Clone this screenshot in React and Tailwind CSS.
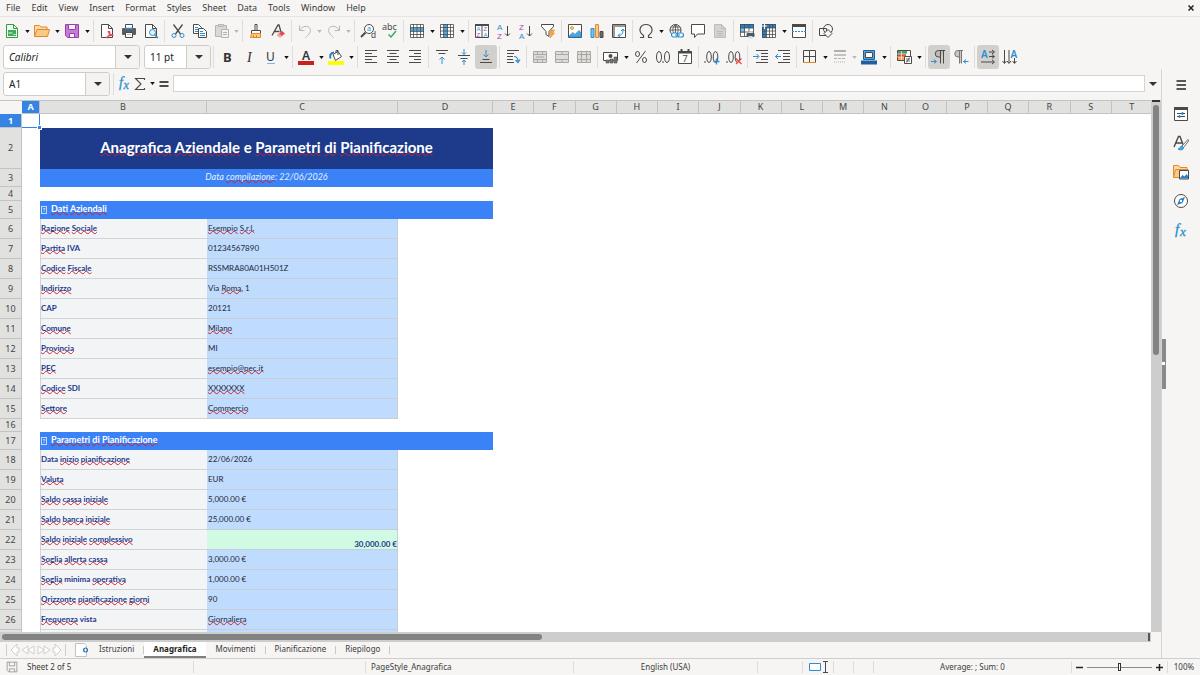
import React, { useState } from 'react';

const INK = '#4a4a48';
const BLUE = '#2a8fd0';
const LIGHT = '#b9b8b5';

// Small line glyphs, all drawn on a 16 x 16 grid
const glyphs = {
    newSheet: (
        <g>
            <path d="M2.5 1.5h7l4 4v9h-11z" fill="#f4fbf5" stroke="#2f9e44" />
            <path d="M9.5 1.5v4h4" fill="none" stroke="#2f9e44" />
            <rect x="4" y="7" width="8" height="6" fill="#43a858" />
            <path d="M4.5 10h4M9.5 11.500h2" stroke="#e6f7e9" />
        </g>
    ),
    open: (
        <g>
            <path d="M.5 13.500v-11h5l1.500 1.500h6v3" fill="#fbd9ab" stroke="#e08a2c" />
            <path d="M3 6.500h12.500l-2 7h-13z" fill="#fbc983" stroke="#e08a2c" />
        </g>
    ),
    save: (
        <g stroke="#9a3fae">
            <path d="M1.500 1.500h13v13h-11l-2-2z" fill="#c77bd6" />
            <path d="M4.500 1.500h7v5h-7z" fill="#fdf6ff" />
            <path d="M5.500 10.500h5v4h-5z" fill="#fdf6ff" />
        </g>
    ),
    pdf: (
        <g fill="none">
            <path d="M2.500 1.500h7l4 4v9h-11z" fill="#fff" stroke={INK} />
            <path d="M9.500 1.500v4h4" stroke={INK} />
            <path d="M8 15c2-2 3-5 2.500-7M9 8c1 3 3 4 5.500 4.500M7.500 15c1-2 4-3 7-2.500" stroke="#e5484d" strokeWidth="1.200" />
        </g>
    ),
    print: (
        <g>
            <path d="M4.500 5V1.500h7V5" fill="#fff" stroke={INK} />
            <rect x="1" y="5" width="14" height="7" rx="1" fill="#5b5c5e" />
            <path d="M4 5.500h8" stroke={BLUE} strokeWidth="1.500" />
            <path d="M4.500 9.500h7v5h-7z" fill="#fff" stroke={INK} />
            <path d="M6 11.500h4" stroke={LIGHT} />
        </g>
    ),
    preview: (
        <g fill="none">
            <path d="M2.500 1.500h7l4 4v9h-11z" fill="#fff" stroke={INK} />
            <path d="M9.500 1.500v4h4" stroke={INK} />
            <circle cx="9.500" cy="9.500" r="3" fill="#e4f3fc" stroke={BLUE} />
            <path d="M11.500 11.500l3.500 3.500" stroke={BLUE} strokeWidth="1.500" />
        </g>
    ),
    cut: (
        <g fill="none">
            <path d="M3.500 1.500l7 9.500M12.500 1.500l-7 9.500" stroke={INK} strokeWidth="1.300" />
            <circle cx="4" cy="12.500" r="2" stroke={BLUE} />
            <circle cx="12" cy="12.500" r="2" stroke={BLUE} />
        </g>
    ),
    copy: (
        <g fill="#fff" stroke={INK}>
            <path d="M1.500 1.500h5l3 3v6h-8z" />
            <path d="M3 4.500h3M3 6.500h4M3 8.500h4" stroke={BLUE} />
            <path d="M6.500 5.500h5l3 3v6h-8z" />
            <path d="M8 8.500h3M8 10.500h5M8 12.500h5" stroke={BLUE} />
        </g>
    ),
    paste: (
        <g stroke="#b5b4b1" fill="#d9d8d5">
            <path d="M1.500 2.500h11v11h-11z" />
            <path d="M4.500 1.500h5v2h-5z" />
            <path d="M7.500 6.500h7v8h-7z" fill="#f2f1ef" />
            <path d="M9 9.500h4M9 11.500h4" />
        </g>
    ),
    brush: (
        <g>
            <path d="M7 1.500h2v6H7z" fill="#fff" stroke={INK} />
            <path d="M3.500 7.500h9v3h-9z" fill="#fff" stroke={INK} />
            <path d="M3.500 10.500h9v4h-10z" fill="#fbc983" stroke="#e08a2c" />
            <path d="M5.500 12v2M8.500 12v2" stroke="#e08a2c" />
        </g>
    ),
    clear: (
        <g>
            <path d="M2 12.500L8 2h1l2 7M4.500 8.500h5" fill="none" stroke={INK} strokeWidth="1.300" />
            <path d="M7 12l5-4 3 2.500-5 4z" fill="#e5484d" />
            <path d="M7 12l2-1.500 3 2.500-2 1.500z" fill="#f6a5a7" />
        </g>
    ),
    undo: <path d="M2.500 2.500v5h5M3 7c2-4 8-5 10-1.500 1.500 3-1 6-4.500 9" fill="none" stroke={LIGHT} />,
    redo: <path d="M13.500 2.500v5h-5M13 7c-2-4-8-5-10-1.500-1.500 3 1 6 4.500 9" fill="none" stroke={LIGHT} />,
    find: (
        <g fill="none" fontFamily="Liberation Sans, sans-serif">
            <circle cx="9" cy="6" r="4.500" fill="#fff" stroke={INK} />
            <path d="M5.500 9.500l-4.500 4.500" stroke={INK} strokeWidth="2" />
            <text x="7" y="8" fontSize="7" fill={BLUE}>a</text>
            <text x="11" y="15" fontSize="9" fill={INK}>d</text>
        </g>
    ),
    spell: (
        <g>
            <text x="0" y="7" fontSize="9" fill={INK}>abc</text>
            <path d="M6.500 11.500l2.500 2.500 5-6" fill="none" stroke="#2fae6a" strokeWidth="1.500" />
        </g>
    ),
    row: (
        <g fill="none">
            <path d="M1.500 1.500h13v13h-13z" fill="#fff" />
            <path d="M1 5h14v3H1z" fill="#4ea6e0" />
            <path d="M1.500 1.500h13v13h-13zM1 4.500h14M1 8.500h14M1 11.500h14M4.500 1v14M8 1v14M11.500 1v14" stroke={INK} strokeWidth=".8" />
        </g>
    ),
    column: (
        <g fill="none">
            <path d="M1.500 1.500h13v13h-13z" fill="#fff" />
            <path d="M5 1h3.500v14H5z" fill="#4ea6e0" />
            <path d="M1.500 1.500h13v13h-13zM1 4.500h14M1 8h14M1 11.500h14M4.500 1v14M8.500 1v14M11.500 1v14" stroke={INK} strokeWidth=".8" />
        </g>
    ),
    sort: (
        <g fontFamily="Liberation Sans, sans-serif" fontSize="6">
            <path d="M1.500 1.500h13v13h-13zM8 2v12.500" fill="#fff" stroke={INK} />
            <path d="M1 2h14" stroke={INK} strokeWidth="2" />
            <text x="2.500" y="7.500" fill={BLUE}>A</text>
            <text x="2.500" y="14" fill="#a846c0">Z</text>
            <text x="9.500" y="7.500" fill="#a846c0">Z</text>
            <text x="9.500" y="14" fill={BLUE}>A</text>
        </g>
    ),
    sortAsc: (
        <g fill="none" fontFamily="Liberation Sans, sans-serif" fontSize="8">
            <text x="1" y="6.500" fill={BLUE}>A</text>
            <text x="1" y="15.500" fill="#a846c0">Z</text>
            <path d="M11.500 3v10M9 10.500l2.500 2.500 2.500-2.500" stroke={INK} />
        </g>
    ),
    sortDesc: (
        <g fill="none" fontFamily="Liberation Sans, sans-serif" fontSize="8">
            <text x="1" y="6.500" fill="#a846c0">Z</text>
            <text x="1" y="15.500" fill={BLUE}>A</text>
            <path d="M11.500 3v10M9 10.500l2.500 2.500 2.500-2.500" stroke={INK} />
        </g>
    ),
    filter: (
        <g>
            <path d="M1.500 1.500h12v2l-4.500 5v5l-3-2v-3l-4.500-5z" fill="#fff" stroke={INK} />
            <path d="M11 7h3.500l-2 3h2L10 15l1-4H9z" fill="#f5a742" stroke="#e08a2c" strokeWidth=".6" />
        </g>
    ),
    image: (
        <g>
            <path d="M1.500 1.500h13v13h-13z" fill="#fff" stroke={INK} />
            <path d="M2 13l4-3.500 2 2 4-4 2 2.500v4H2z" fill="#4ea6e0" stroke={BLUE} strokeWidth=".8" />
            <circle cx="5" cy="5" r="1.500" fill="#fbc983" stroke="#e08a2c" strokeWidth=".8" />
        </g>
    ),
    chart: (
        <g>
            <path d="M2 5.500h3v9H2z" fill="#7cc0ec" stroke={BLUE} />
            <path d="M6.500 1.500h3v13h-3z" fill="#fbc983" stroke="#e08a2c" />
            <path d="M11 8.500h3v6h-3z" fill="#6b6b69" stroke={INK} />
        </g>
    ),
    pivot: (
        <g fill="none">
            <path d="M1.500 1.500h13v13h-13z" fill="#fff" stroke={INK} />
            <path d="M2 3h12M3 2v12" stroke="#9a9a98" strokeWidth="2" />
            <path d="M7 12.500c4 0 5-2 5-6M7 12.500l2-2M7 12.500l2 1.500M12 6l-2 2M12 6l1.500 2" stroke={BLUE} />
        </g>
    ),
    omega: <path d="M2 14.500h3.500v-2C-1 8 2.500 1.500 8 1.500s9 6.500 2.500 11v2H14" fill="none" stroke={INK} strokeWidth="1.200" />,
    link: (
        <g fill="none">
            <circle cx="7.500" cy="7" r="5.500" stroke={INK} />
            <path d="M2 7h11M3 4h9M7.500 1.500v11M7.500 1.500c-4 4-3 8 0 11M7.500 1.500c4 4 3 8 0 11" stroke={INK} strokeWidth=".8" />
            <rect x="3.500" y="10" width="6" height="4" rx="2" fill="#fff" stroke={BLUE} strokeWidth="1.200" />
            <rect x="9.500" y="10" width="6" height="4" rx="2" fill="#fff" stroke={BLUE} strokeWidth="1.200" />
            <path d="M7 12h5" stroke={BLUE} />
        </g>
    ),
    comment: <path d="M1.500 1.500h13v9.500H7.500L4.500 14.500V11h-3z" fill="#fff" stroke={INK} />,
    header: (
        <g stroke="#bdbcb9">
            <path d="M2.500 1.500h7l4 4v9h-11z" fill="#d4d3d0" />
            <path d="M9.500 1.500v4h4" fill="none" />
            <path d="M5 8.500h6M5 10.500h6M5 12.500h6" />
        </g>
    ),
    printRange: (
        <g>
            <path d="M1.500 1.500h13v11h-13z" fill="#fff" />
            <path d="M1 1h14v4H1z" fill="#2b7fc4" />
            <path d="M1 5h5v5H1z" fill="#7cc0ec" />
            <path d="M1.500 1.500h13v12h-13zM1 5h14M1 9h14M5.500 1v13M10 1v13" fill="none" stroke={INK} strokeWidth=".8" />
            <rect x="7.500" y="10" width="8" height="4" rx="1" fill="#565759" />
            <path d="M9.500 13h4v2.500h-4zM9.500 8.500h4V10h-4z" fill="#bfe0f5" />
        </g>
    ),
    freeze: (
        <g>
            <path d="M1.500 1.500h13v13h-13z" fill="#fff" />
            <path d="M1 1h14v4H1zM1 5h4.500v10H1z" fill="#2b7fc4" />
            <path d="M1.500 1.500h13v13h-13zM1 5h14M1 8h14M1 11.500h14M5.500 1v14M8.500 1v14M11.500 1v14" fill="none" stroke={INK} strokeWidth=".8" />
            <path d="M3.500 0v6M1 3h5" stroke="#fff" />
        </g>
    ),
    split: (
        <g>
            <path d="M1.500 1.500h13v13h-13z" fill="#fff" stroke={INK} />
            <path d="M1 2.500h14" stroke={INK} strokeWidth="3" />
            <path d="M1 8.500h14" stroke={BLUE} strokeDasharray="2 1" />
        </g>
    ),
    shapes: (
        <g fill="none" stroke={INK}>
            <circle cx="10" cy="6" r="4.500" />
            <path d="M1.500 5.500h7v7h-7z" />
            <path d="M10 6.500l4 4-4 4-4-4z" fill="#f6f5f3" />
        </g>
    ),
    bold: <text x="4" y="13" fontSize="13" fontWeight="700" fill="#333">B</text>,
    italic: <text x="6" y="13" fontSize="14" fontStyle="italic" fontFamily="Liberation Serif, serif" fill="#333">I</text>,
    underline: (
        <g>
            <text x="3" y="12" fontSize="12" fill="#333">U</text>
            <path d="M4 14.500h8" stroke="#7db9e8" />
        </g>
    ),
    fontColor: (
        <g>
            <text x="4" y="11" fontSize="12" fontWeight="600" fill="#333">A</text>
            <path d="M0 14h16" stroke="#c9211e" strokeWidth="4" />
        </g>
    ),
    fill: (
        <g>
            <path d="M5 5.500l5-3 3.500 5-6 4z" fill="#fff" stroke={INK} />
            <path d="M8 4V1.500h2V6" fill="none" stroke={INK} />
            <path d="M2.500 9.500c-1-3 0-5.500 3.500-6" fill="none" stroke="#2b7fc4" strokeWidth="2" />
            <path d="M0 14h16" stroke="#ffff00" strokeWidth="4" />
        </g>
    ),
    left: <path d="M2 1.500h12M2 4.500h7M2 7.500h12M2 10.500h7M2 13.500h12" stroke={INK} />,
    center: <path d="M2 1.500h12M4.500 4.500h7M2 7.500h12M4.500 10.500h7M2 13.500h12" stroke={INK} />,
    right: <path d="M2 1.500h12M7 4.500h7M2 7.500h12M7 10.500h7M2 13.500h12" stroke={INK} />,
    top: (
        <g fill="none">
            <path d="M2 1.500h12M4.500 4.500h7" stroke={INK} />
            <path d="M8 15V8M5.500 10.500L8 8l2.500 2.500" stroke={BLUE} />
        </g>
    ),
    middle: (
        <g fill="none">
            <path d="M2 6.500h12M4.500 9.500h7" stroke={INK} />
            <path d="M8 0v5M6 3.500l2 2 2-2M8 16v-5M6 13l2-2 2 2" stroke={BLUE} />
        </g>
    ),
    bottom: (
        <g fill="none">
            <path d="M2 13.500h12M4.500 10.500h7" stroke={INK} />
            <path d="M8 1v7M5.500 5.500L8 8l2.500-2.500" stroke={BLUE} />
        </g>
    ),
    wrap: (
        <g fill="none">
            <path d="M2 1.500h12M2 4.500h7M2 7.500h6M2 10.500h6M2 13.500h7" stroke={INK} />
            <path d="M9 7.500c3 0 4 2 4 5M10.500 11l2.500 2.500 2-3" stroke={BLUE} strokeWidth="1.200" />
        </g>
    ),
    merge: (
        <g fill="#dddcd9" stroke="#a9a8a5">
            <path d="M1.500 2.500h13v11h-13zM1 5.500h14M1 10.500h14M5.500 2v3M10.500 2v3M5.500 11v3M10.500 11v3M4 8h8" />
        </g>
    ),
    mergeCells: (
        <g fill="#dddcd9" stroke="#a9a8a5">
            <path d="M1.500 2.500h13v11h-13zM1 5.500h14M1 10.500h14M8 2v3M8 11v3" />
        </g>
    ),
    unmerge: (
        <g fill="#dddcd9" stroke="#a9a8a5">
            <path d="M1.500 2.500h13v11h-13zM1 5.500h14M1 10.500h14M5.500 2v12M10.500 2v12" />
        </g>
    ),
    currency: (
        <g>
            <path d="M.5 3.500h14v8H.5z" fill="#fff" stroke={INK} />
            <circle cx="7.500" cy="7" r="2" fill={INK} />
            <path d="M3 14v-3h3v3zM7 14v-4h3v4zM11 14V8h3v6z" fill="#777" stroke={INK} strokeWidth=".6" />
        </g>
    ),
    percent: (
        <g fill="none" stroke={INK}>
            <ellipse cx="4.500" cy="5" rx="2" ry="2.500" />
            <ellipse cx="11.500" cy="11" rx="2" ry="2.500" />
            <path d="M12.500 2l-9 12" />
        </g>
    ),
    number: (
        <g fill="none" stroke={INK}>
            <ellipse cx="4" cy="8" rx="2.500" ry="5.500" />
            <ellipse cx="12" cy="8" rx="2.500" ry="5.500" />
            <path d="M8 12v2" />
        </g>
    ),
    date: (
        <g>
            <path d="M1.500 2.500h13v12h-13z" fill="#fff" stroke={INK} />
            <path d="M1 3.500h14M4.500 0v3M11.500 0v3" stroke={INK} strokeWidth="2" />
            <text x="5.500" y="13" fontSize="9" fill={INK}>7</text>
        </g>
    ),
    addDecimal: (
        <g fill="none" stroke={INK}>
            <path d="M1 12v2" />
            <ellipse cx="5" cy="8" rx="2.300" ry="5.500" />
            <ellipse cx="11.500" cy="8" rx="2.300" ry="5.500" />
            <path d="M12.500 9.500v6M9.500 12.500h6" stroke={BLUE} strokeWidth="1.300" />
        </g>
    ),
    delDecimal: (
        <g fill="none" stroke={INK}>
            <path d="M1 12v2" />
            <ellipse cx="5" cy="8" rx="2.300" ry="5.500" />
            <ellipse cx="11.500" cy="8" rx="2.300" ry="5.500" />
            <path d="M10 9.500l5.500 5.500M15.500 9.500L10 15" stroke="#e5484d" strokeWidth="1.300" />
        </g>
    ),
    indent: (
        <g fill="none">
            <path d="M3 1.500h12M8 4.500h7M8 7.500h7M8 10.500h7M3 13.500h12" stroke={INK} />
            <path d="M0 7.500h5.500M3.500 5L6 7.500 3.500 10" stroke={BLUE} />
        </g>
    ),
    outdent: (
        <g fill="none">
            <path d="M3 1.500h12M8 4.500h7M8 7.500h7M8 10.500h7M3 13.500h12" stroke={INK} />
            <path d="M6 7.500H.5M3 5L.5 7.500 3 10" stroke={BLUE} />
        </g>
    ),
    borders: (
        <g fill="none">
            <path d="M1.500 13.500v-12h12v12M7.500 2v12M2 7.500h12" stroke={INK} />
            <path d="M1 13.500h13" stroke="#e08a2c" />
        </g>
    ),
    borderStyle: (
        <g stroke="#b0afac">
            <path d="M2 2h12" strokeWidth="2" />
            <path d="M2 6h12" strokeWidth="1.500" />
            <path d="M2 9.500h12" strokeDasharray="3 1" />
            <path d="M2 13h12" strokeDasharray="1 1" />
        </g>
    ),
    borderColor: (
        <g>
            <path d="M2.500 1.500h11v9h-11z" fill="#4ea6e0" stroke="#1f5f9e" />
            <path d="M4.500 3.500h7v5h-7z" fill="#fff" stroke={INK} />
            <path d="M0 13.500h16" stroke="#1f5f9e" strokeWidth="4" />
        </g>
    ),
    conditional: (
        <g>
            <path d="M1.500 1.500h13v10h-13z" fill="#fff" stroke={INK} />
            <path d="M2 2h9v3H2z" fill="#43a858" />
            <path d="M2 5h8v3H2z" fill="#e5484d" />
            <path d="M2 8h6v3H2z" fill="#f5a742" />
            <path d="M5.500 2v9M1 5h13M1 8h13" stroke="#fff" strokeWidth=".6" />
            <path d="M8.500 7.500h7v7h-7z" fill="#fff" stroke={INK} />
            <path d="M10 10h4M10 12h4M13.500 8.500l-3 5" stroke={INK} strokeWidth=".8" />
        </g>
    ),
    ltr: (
        <g fill="none">
            <path d="M14 1.500H7.500a3 3 0 0 0 0 6.500h2z" fill="#bdbbb7" />
            <path d="M14 1.500H7.500a3 3 0 0 0 0 6.500h2M9.500 1.500v13M12.500 1.500v13" stroke={INK} />
            <path d="M0 12.500h5M3 10.500l2.500 2-2.500 2" stroke={BLUE} />
        </g>
    ),
    rtl: (
        <g fill="none">
            <path d="M8.500 1.500H5a3 3 0 0 0 0 6.500h1.500v6h2z" fill="#c9c7c3" />
            <path d="M10 1.500H5a3 3 0 0 0 0 6.500h1.500M6.500 1.500v13M8.500 1.500v13" stroke="#777" />
            <path d="M15.500 12.500h-5M13 10.500l-2.500 2 2.500 2" stroke={BLUE} />
        </g>
    ),
    horizontal: (
        <g fill="none">
            <text x="1" y="9" fontSize="10" fontWeight="600" fill={BLUE}>A</text>
            <path d="M9 3h5M12 1l2.500 2L12 5M9 7.500h5M12 5.500l2.500 2-2.500 2M1 13h13M12 11l2.500 2-2.500 2" stroke={INK} />
        </g>
    ),
    vertical: (
        <g fill="none">
            <text x="8.500" y="9" fontSize="10" fontWeight="600" fill={BLUE}>A</text>
            <path d="M2.500 1v13M.5 12l2 2.500 2-2.500M7 1v13M5 12l2 2.500L9 12M12.500 9v5M10.500 12l2 2.500 2-2.500" stroke={INK} />
        </g>
    ),
    fx: (
        <g fontStyle="italic" fontFamily="Liberation Serif, serif" fill={BLUE} stroke={BLUE} strokeWidth=".3">
            <text x="2" y="12" fontSize="15">f</text>
            <text x="7" y="14" fontSize="13">x</text>
        </g>
    ),
    sigma: <path d="M12.500 4V2.500h-9L9 8l-5.500 5.500h9V12" fill="none" stroke={INK} strokeWidth="1.100" />,
    equals: <path d="M3.500 6h9M3.500 10h9" stroke="#4a4a48" strokeWidth="2" />,
    menu: <path d="M3.500 4h9.500M3.500 8h9.500M3.500 12h9.500" stroke="#222" strokeWidth="1.300" />,
    properties: (
        <g fill="none">
            <path d="M1.500 1.500h13v13h-13z" fill="#fff" stroke={INK} />
            <path d="M1 2.500h14" stroke={INK} strokeWidth="3" />
            <path d="M4 7.500h8M4 10.500h8" stroke={INK} />
            <path d="M9.500 6v3M6.500 9v3" stroke={BLUE} strokeWidth="1.500" />
        </g>
    ),
    styles: (
        <g fill="none">
            <path d="M1 12L5.500 1.500h1.500l3 8M3 8h6" stroke={INK} strokeWidth="1.400" />
            <path d="M15 4.500L9 11l1.500 1.500L15.500 6z" fill="#fff" stroke={INK} strokeWidth=".8" />
            <path d="M9 11c-2 0-2 3-4 3 2 1.500 6 1 5.500-1.500z" fill="#4ea6e0" stroke={BLUE} />
        </g>
    ),
    gallery: (
        <g>
            <path d="M.5 13.500v-12h5l1.500 2h7V6" fill="#fbd9ab" stroke="#e08a2c" />
            <path d="M.5 13.500l2-8h12.500v8z" fill="#fbc983" stroke="#e08a2c" />
            <path d="M6.500 6.500h9v8.500h-9z" fill="#fff" stroke={INK} />
            <path d="M7 14l2.500-3 2 1.500 2-2.500 1.500 2v2.500H7z" fill="#2b7fc4" />
        </g>
    ),
    navigator: (
        <g>
            <circle cx="8" cy="8" r="6.500" fill="#fff" stroke={INK} />
            <path d="M12 4l-2.500 6L4 12l2.500-6z" fill="#2b7fc4" />
            <circle cx="8" cy="8" r="1.200" fill="#fff" />
        </g>
    ),
    docStatus: (
        <g fill="none" stroke="#8a8a88">
            <path d="M1.500 1.500h13v13h-11l-2-2zM4.500 1.500v5h7v-5M4.500 14.500v-4h7v4" />
        </g>
    ),
    addSheet: (
        <g>
            <path d="M1.500 1.500h9l2 2v11h-11z" fill="#fff" stroke="#c4c3c0" />
            <circle cx="11.500" cy="8" r="2.500" fill="#2b6fb3" />
            <path d="M11.500 6.500v3M10 8h3" stroke="#fff" />
        </g>
    ),
    first: <path d="M2.500 2v12M13 2L7 8l6 6v-4h2V6h-2z" fill="#fff" stroke="#cfcecb" />,
    prev: <path d="M8 4L2 8l6 4zM14 4L8 8l6 4z" fill="#fff" stroke="#cfcecb" />,
    next: <path d="M8 4l6 4-6 4zM2 4l6 4-6 4z" fill="#fff" stroke="#cfcecb" />,
    last: <path d="M13.500 2v12M3 2l6 6-6 6v-4H1V6h2z" fill="#fff" stroke="#cfcecb" />,
};

const Glyph = ({ name, className = 'size-4' }) => (
    <svg viewBox="0 0 16 16" className={`overflow-visible ${className}`} aria-hidden="true">
        {glyphs[name]}
    </svg>
);

const Caret = ({ light }) => (
    <svg viewBox="0 0 6 4" className="h-[3px] w-[5px]" aria-hidden="true">
        <path d="M0 0h6L3 4z" fill={light ? LIGHT : '#111'} />
    </svg>
);

const standardBar = [
    'newSheet+', 'open+', 'save+', '|', 'pdf', 'print', 'preview', '|', 'cut', 'copy', 'paste-', '|',
    'brush', 'clear', '|', 'undo-', 'redo-', '|', 'find', 'spell', '|', 'row+', 'column+', '|',
    'sort', 'sortAsc', 'sortDesc', 'filter', '|', 'image', 'chart', 'pivot', '|', 'omega+', 'link',
    'comment', 'header', '|', 'printRange', 'freeze+', 'split', '|', 'shapes',
];

const formatBar = [
    '|', 'bold', 'italic', 'underline+', '|', 'fontColor+', 'fill+', '|', 'left', 'center', 'right', '|',
    'top', 'middle', 'bottom*', '|', 'wrap', '|', 'merge', 'mergeCells', 'unmerge', '|', 'currency+',
    'percent', 'number', 'date', '|', 'addDecimal', 'delDecimal', '|', 'indent', 'outdent', '|',
    'borders+', 'borderStyle-', 'borderColor+', '|', 'conditional+', '|', 'ltr*', 'rtl', '|',
    'horizontal*', 'vertical',
];

// "+" adds a drop-down arrow, "-" a disabled one, "*" marks a pressed button
const ToolItems = ({ items }) =>
    items.map((item, i) => {
        if (item === '|') {
            return (
                <span key={i} className="flex w-[5px] justify-center">
                    <span className="h-[22px] w-px bg-[#dedddb]" />
                </span>
            );
        }
        const name = item.replace(/[+*-]$/, '');
        return (
            <React.Fragment key={i}>
                <button
                    type="button"
                    aria-label={name}
                    className={`flex h-6 w-[22px] shrink-0 items-center justify-center rounded-[3px] ${item.endsWith('*') ? 'bg-[#d2d0cc]' : ''}`}
                >
                    <Glyph name={name} />
                </button>
                {item.endsWith('+') && (
                    <button type="button" aria-label={`${name} options`} className="flex h-6 w-2 items-center justify-center">
                        <Caret />
                    </button>
                )}
                {item.endsWith('-') && (
                    <button type="button" disabled aria-label={`${name} options`} className="flex h-6 w-[7px] items-center justify-center">
                        <Caret light />
                    </button>
                )}
            </React.Fragment>
        );
    });

const Combo = ({ label, value, className, italic }) => {
    const [text, setText] = useState(value);
    return (
        <div className={`flex h-6 overflow-hidden rounded-[3px] border border-[#cfcdca] bg-white ${className}`}>
            <input
                aria-label={label}
                value={text}
                onChange={(e) => setText(e.target.value)}
                className={`w-0 grow px-[5px] text-[10px] text-[#222] outline-none ${italic ? 'italic' : ''}`}
            />
            <button type="button" aria-label={`${label} list`} className="flex w-6 items-center justify-center border-l border-[#cfcdca] bg-[#f4f3f1]">
                <svg viewBox="0 0 8 4" className="h-1 w-2" aria-hidden="true">
                    <path d="M0 0h8L4 4z" fill="#333" />
                </svg>
            </button>
        </div>
    );
};

// Words between tildes are flagged by the spell checker
const Cell = ({ text }) =>
    text.split('~').map((part, i) =>
        i % 2 ? (
            <span key={i} className="underline decoration-[#d0202c] decoration-wavy decoration-1 underline-offset-[-1px] [text-decoration-skip-ink:none]">
                {part}
            </span>
        ) : (
            part
        )
    );

const company = [
    ['~Ragione~ ~Sociale~', '~Esempio~ ~S.r.l.~'],
    ['~Partita~ IVA', '01234567890'],
    ['~Codice~ ~Fiscale~', 'RSSMRA80A01H501Z'],
    ['~Indirizzo~', 'Via ~Roma~, 1'],
    ['CAP', '20121'],
    ['~Comune~', '~Milano~'],
    ['~Provincia~', 'MI'],
    ['~PEC~', '~esempio@pec.it~'],
    ['~Codice~ SDI', '~XXXXXXX~'],
    ['~Settore~', '~Commercio~'],
];

const planning = [
    ['Data ~inizio~ ~pianificazione~', '22/06/2026'],
    ['~Valuta~', 'EUR'],
    ['~Saldo~ ~cassa~ ~iniziale~', '5,000.00 €'],
    ['~Saldo~ ~banca~ ~iniziale~', '25,000.00 €'],
    ['~Saldo~ ~iniziale~ ~complessivo~', '30,000.00 €', true],
    ['~Soglia~ ~allerta~ ~cassa~', '3,000.00 €'],
    ['~Soglia~ minima ~operativa~', '1,000.00 €'],
    ['~Orizzonte~ ~pianificazione~ ~giorni~', '90'],
    ['~Frequenza~ vista', '~Giornaliera~'],
    ['', ''],
];

const columns = 'ABCDEFGHIJKLMNOPQRST'.split('');

const RowHead = ({ n, active }) => (
    <th
        scope="row"
        className={`border-r border-b border-[#c3c3c2] text-[9px] ${active ? 'bg-[#3584e4] font-bold text-white' : 'bg-[#e1e1e0] font-normal text-[#444]'}`}
    >
        {n}
    </th>
);

const BlankRow = ({ n, className }) => (
    <tr className={className}>
        <RowHead n={n} />
        <td colSpan={20} />
    </tr>
);

const SectionRow = ({ n, title }) => (
    <tr className="h-[18px] text-[9px] font-bold text-white">
        <RowHead n={n} />
        <td />
        <td colSpan={3} className="bg-[#3b82f6] pb-0.5 pl-px">
            <span className="mr-1 inline-block h-2 w-[6px] border border-[#c9dcfb] text-center align-middle text-[5px] leading-[6px]">?</span>
            <Cell text={title} />
        </td>
        <td colSpan={16} />
    </tr>
);

const DataRow = ({ n, row: [label, value, total] }) => (
    <tr className="h-5">
        <RowHead n={n} />
        <td />
        <td className="border-b border-l border-[#d1d3d6] bg-[#f3f4f6] pb-0.5 font-bold text-[#1e3a8a]">
            <Cell text={label} />
        </td>
        <td
            className={`border-r border-b border-[#c6cdd6] ${total ? 'bg-[#d1fae5] text-right align-bottom font-bold text-[#1e3a8a]' : 'bg-[#bfdbfe] pb-0.5 pl-px text-[#1f2937]'}`}
        >
            <Cell text={value} />
        </td>
        <td colSpan={17} />
    </tr>
);

const Sheet = () => (
    <div className="h-0 grow overflow-hidden bg-white">
        <table className="w-[calc(100%+2px)] table-fixed border-separate border-spacing-0 font-[Lato,sans-serif] text-[8px] leading-[10px] whitespace-nowrap">
            <colgroup>
                <col className="w-[22px]" />
                <col className="w-[18px]" />
                <col className="w-[167px]" />
                <col className="w-[191px]" />
                <col className="w-[95px]" />
                {columns.slice(4).map((c) => (
                    <col key={c} />
                ))}
            </colgroup>
            <thead className="font-['Noto_Sans',sans-serif]">
                <tr className="h-[14px]">
                    <th className="border-t border-[#c3c3c2] bg-[#f6f5f3]" />
                    {columns.map((c) => (
                        <th
                            key={c}
                            scope="col"
                            className={`border-t border-r border-b border-[#c3c3c2] text-[9px] ${c === 'A' ? 'bg-[#3584e4] font-bold text-white' : 'bg-[#e1e1e0] font-normal text-[#444]'}`}
                        >
                            {c}
                        </th>
                    ))}
                </tr>
            </thead>
            <tbody className="[&_th]:font-['Noto_Sans',sans-serif]">
                <tr className="h-[14px]">
                    <RowHead n={1} active />
                    <td className="relative border-r border-b border-[#3584e4]">
                        <span className="absolute -right-[3px] -bottom-[3px] size-[5px] border border-white bg-[#3584e4]" />
                    </td>
                    <td colSpan={19} />
                </tr>
                <tr className="h-[41px]">
                    <RowHead n={2} />
                    <td />
                    <td colSpan={3} className="bg-[#1e3a8a] pb-1 text-center text-[15px] leading-5 font-bold text-white">
                        <Cell text="~Anagrafica~ ~Aziendale~ e ~Parametri~ ~di~ ~Pianificazione~" />
                    </td>
                    <td colSpan={16} />
                </tr>
                <tr className="h-[18px]">
                    <RowHead n={3} />
                    <td />
                    <td colSpan={3} className="bg-[#3b82f6] pb-0.5 text-center text-[9px] text-[#e6effe] italic">
                        <Cell text="Data ~compilazione~: 22/06/2026" />
                    </td>
                    <td colSpan={16} />
                </tr>
                <BlankRow n={4} className="h-[14px]" />
                <SectionRow n={5} title="~Dati~ ~Aziendali~" />
                {company.map((row, i) => (
                    <DataRow key={i} n={i + 6} row={row} />
                ))}
                <BlankRow n={16} className="h-[13px]" />
                <SectionRow n={17} title="~Parametri~ ~di~ ~Pianificazione~" />
                {planning.map((row, i) => (
                    <DataRow key={i} n={i + 18} row={row} />
                ))}
            </tbody>
        </table>
    </div>
);

const sheets = ['Istruzioni', 'Anagrafica', 'Movimenti', 'Pianificazione', 'Riepilogo'];

const SheetTabs = () => {
    const [active, setActive] = useState('Anagrafica');
    return (
        <div className="flex h-4 items-center text-[8px]">
            <div className="flex pl-1">
                {['first', 'prev', 'next', 'last'].map((name) => (
                    <button key={name} type="button" aria-label={name} disabled>
                        <Glyph name={name} />
                    </button>
                ))}
            </div>
            <button type="button" aria-label="Add sheet" className="ml-[6px]">
                <Glyph name="addSheet" />
            </button>
            {sheets.map((name) => (
                <React.Fragment key={name}>
                    <button
                        type="button"
                        onClick={() => setActive(name)}
                        className={`h-4 border-b-2 px-[9px] ${active === name ? 'border-[#808080] bg-white font-bold text-[#222]' : 'border-transparent'}`}
                    >
                        {name}
                    </button>
                    <span className={`h-2 w-px ${active === name ? '' : 'bg-[#c9c8c6]'}`} />
                </React.Fragment>
            ))}
        </div>
    );
};

const StatusBar = () => {
    const [zoom, setZoom] = useState(50);
    return (
        <footer className="flex h-[17px] items-center border-t border-[#cfcecc] text-[8px] [&>div]:flex [&>div]:h-3 [&>div]:items-center [&>div+div]:border-l [&>div+div]:border-[#dedddb]">
            <div className="grow basis-[193px] pl-[6px]">
                <Glyph name="docStatus" className="mr-[9px] size-3" />
                Sheet 2 of 5
            </div>
            <div className="grow basis-[172px]" />
            <div className="grow basis-[208px] pl-[5px]">PageStyle_Anagrafica</div>
            <div className="grow basis-[184px] justify-center">English (USA)</div>
            <div className="grow basis-[45px]" />
            <div className="grow basis-[31px] pl-[6px]">
                <svg viewBox="0 0 20 12" className="h-3 w-5" aria-hidden="true">
                    <path d="M.5 2.500h11v7H.5z" fill="#fff" stroke={BLUE} />
                    <path d="M14 .5h5M14 11.500h5M16.500 .5v11" stroke={INK} />
                </svg>
            </div>
            <div className="grow basis-5" />
            <div className="grow basis-5" />
            <div className="grow basis-[198px] justify-center">Average: ; Sum: 0</div>
            <div className="grow basis-[96px] justify-center gap-1">
                <button type="button" aria-label="Zoom out" onClick={() => setZoom(zoom - 5)}>
                    <svg viewBox="0 0 7 7" className="size-[7px]"><path d="M0 3.500h7" stroke="#222" strokeWidth="1.500" /></svg>
                </button>
                <input
                    type="range"
                    aria-label="Zoom"
                    value={zoom}
                    onChange={(e) => setZoom(Number(e.target.value))}
                    className="h-2 w-[65px] appearance-none bg-[linear-gradient(#8a8a88,#8a8a88)] bg-[length:100%_1px] bg-center bg-no-repeat [&::-webkit-slider-thumb]:h-2 [&::-webkit-slider-thumb]:w-[3px] [&::-webkit-slider-thumb]:appearance-none [&::-webkit-slider-thumb]:border [&::-webkit-slider-thumb]:border-[#333] [&::-webkit-slider-thumb]:bg-white"
                />
                <button type="button" aria-label="Zoom in" onClick={() => setZoom(zoom + 5)}>
                    <svg viewBox="0 0 7 7" className="size-[7px]"><path d="M0 3.500h7M3.500 0v7" stroke="#222" strokeWidth="1.500" /></svg>
                </button>
            </div>
            <div className="grow basis-[33px] justify-center">100%</div>
        </footer>
    );
};

const App = () => {
    const [formula, setFormula] = useState('');

    return (
        <div className="flex h-screen flex-col overflow-hidden bg-[#f6f5f3] font-['Noto_Sans',sans-serif] text-[9px] leading-3 text-[#3c3c3b]">
            <nav className="flex h-[17px] items-center gap-[11px] border-b border-[#e6e5e3] px-[6px]">
                {['File', 'Edit', 'View', 'Insert', 'Format', 'Styles', 'Sheet', 'Data', 'Tools', 'Window', 'Help'].map((m) => (
                    <button key={m} type="button">{m}</button>
                ))}
                <button type="button" aria-label="Close document" className="ml-auto">
                    <svg viewBox="0 0 6 6" className="size-[6px]"><path d="M.5 .5l5 5M5.500 .5l-5 5" stroke="#222" strokeWidth="1.500" /></svg>
                </button>
            </nav>

            <div className="flex h-7 items-center pl-px">
                <ToolItems items={standardBar} />
            </div>
            <div className="flex h-6 items-center pl-[3px]">
                <Combo label="Font name" value="Calibri" className="mr-1 w-[137px]" italic />
                <Combo label="Font size" value="11 pt" className="w-[67px]" />
                <ToolItems items={formatBar} />
            </div>

            <main className="flex h-0 grow">
                <div className="flex w-0 grow flex-col">
                    <div className="flex h-[31px] items-center pt-[2px] pb-1 pl-[3px]">
                        <Combo label="Name box" value="A1" className="w-[107px]" />
                        <span className="ml-[3px] h-[22px] w-px bg-[#dedddb]" />
                        <button type="button" aria-label="Function wizard" className="ml-[3px]">
                            <Glyph name="fx" className="size-[15px]" />
                        </button>
                        <button type="button" aria-label="Sum"><Glyph name="sigma" /></button>
                        <button type="button" aria-label="Sum options" className="flex w-2 justify-center"><Caret /></button>
                        <button type="button" aria-label="Formula" className="mr-px"><Glyph name="equals" /></button>
                        <input
                            aria-label="Formula input"
                            value={formula}
                            onChange={(e) => setFormula(e.target.value)}
                            className="h-[17px] w-0 grow border border-[#d5d4d2] bg-white px-1 outline-none"
                        />
                        <button type="button" aria-label="Expand formula bar" className="flex w-4 justify-center">
                            <svg viewBox="0 0 8 4" className="h-1 w-2"><path d="M0 0h8L4 4z" fill="#333" /></svg>
                        </button>
                    </div>
                    <div className="flex grow">
                        <div className="flex w-0 grow flex-col">
                            <Sheet />
                            <div className="flex h-[10px] items-center justify-between bg-[#cdcdcd] pl-[2px]">
                                <div className="h-[6px] w-[47%] rounded-full bg-[#828282]" />
                                <div className="mr-px h-2 w-[2px] bg-[#555]" />
                            </div>
                        </div>
                        <div className="mb-[10px] flex w-[10px] flex-col items-center bg-[#cdcdcd]">
                            <div className="h-[2px] w-2 bg-[#333]" />
                            <div className="mt-[3px] h-[47%] w-[6px] rounded-full bg-[#828282]" />
                        </div>
                    </div>
                    <SheetTabs />
                </div>
                <aside className="relative flex w-[39px] flex-col items-center gap-[13px] border-l border-[#d5d4d2] pt-2">
                    <div className="absolute top-1/2 left-0 flex h-[50px] w-1 -translate-y-1/2 items-center bg-[#8a8a88]">
                        <span className="size-[3px] bg-white" />
                    </div>
                    {['menu', 'properties', 'styles', 'gallery', 'navigator', 'fx'].map((name) => (
                        <button key={name} type="button" aria-label={name}>
                            <Glyph name={name} />
                        </button>
                    ))}
                </aside>
            </main>

            <StatusBar />
        </div>
    );
};

export default App;
